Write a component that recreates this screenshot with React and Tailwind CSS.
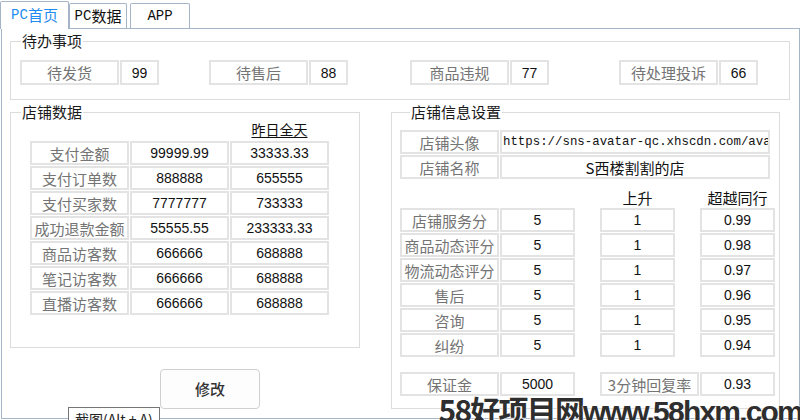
import React from "react";

const cjk = "font-['Noto_Sans_CJK_SC',sans-serif]";
const num = "font-['Liberation_Sans',sans-serif]";
const cell = "flex items-center justify-center border-2 border-[#e3e3e3] bg-white leading-none";
const label = `${cell} ${cjk} text-[15px] text-[#747474]`;
const value = `${cell} ${num} text-[14px] text-[#111]`;

const todo = [
  { name: "待发货", val: "99", ml: "ml-[9px]" },
  { name: "待售后", val: "88", ml: "ml-[50px]" },
  { name: "商品违规", val: "77", ml: "ml-[62px]" },
  { name: "待处理投诉", val: "66", ml: "ml-[70px]" },
];

const shopData = [
  ["支付金额", "99999.99", "33333.33"],
  ["支付订单数", "888888", "655555"],
  ["支付买家数", "7777777", "733333"],
  ["成功退款金额", "55555.55", "233333.33"],
  ["商品访客数", "666666", "688888"],
  ["笔记访客数", "666666", "688888"],
  ["直播访客数", "666666", "688888"],
];

const scores = [
  ["店铺服务分", "5", "1", "0.99"],
  ["商品动态评分", "5", "1", "0.98"],
  ["物流动态评分", "5", "1", "0.97"],
  ["售后", "5", "1", "0.96"],
  ["咨询", "5", "1", "0.95"],
  ["纠纷", "5", "1", "0.94"],
];

const Legend = ({ children }) => (
  <legend className={`ml-[10px] px-[1px] ${cjk} text-[15px] leading-[18px] text-[#1a1a1a]`}>
    {children}
  </legend>
);

const App = () => {
  return (
    <div className="relative w-[800px] h-[420px] overflow-hidden bg-white">
      {/* tabs */}
      <div className="relative z-10 flex items-end h-[29px]">
        <div className={`flex items-center justify-center w-[69px] h-[28px] border border-b-0 border-[#a5b5c8] rounded-t-[2px] bg-white text-[15px] text-[#1e8cf0] ${cjk}`}>
          <span className="font-['Liberation_Mono',monospace] text-[14px]">PC</span>首页
        </div>
        <div className={`flex items-center justify-center w-[58px] h-[25px] mb-px border border-b-0 border-[#a5b5c8] rounded-t-[2px] bg-white text-[15px] text-[#111] ${cjk}`}>
          <span className="font-['Liberation_Mono',monospace] text-[14px]">PC</span>数据
        </div>
        <div className="flex items-center justify-center ml-[3px] w-[60px] h-[25px] mb-px border border-b-0 border-[#a5b5c8] rounded-t-[2px] bg-white font-['Liberation_Mono',monospace] text-[14px] text-[#111]">
          APP
        </div>
      </div>

      {/* panel */}
      <div className="ml-px -mt-px h-[391px] border border-[#a5b5c8]">
        {/* 待办事项 */}
        <fieldset className="ml-[8px] mt-[3px] w-[780px] border border-[#dcdcdc] pt-[10px] pb-[14px]">
          <Legend>待办事项</Legend>
          <div className="flex">
            {todo.map((t) => (
              <div key={t.name} className={`flex gap-px ${t.ml}`}>
                <div className={`${label} w-[99px] h-[25px]`}>{t.name}</div>
                <div className={`${value} w-[39px] h-[25px]`}>{t.val}</div>
              </div>
            ))}
          </div>
        </fieldset>

        <div className="flex mt-[3px]">
          {/* 店铺数据 */}
          <div className="ml-[8px] w-[350px]">
            <fieldset className="w-[350px] border border-[#dcdcdc] pb-[32px]">
              <Legend>店铺数据</Legend>
              <div className="flex justify-end h-[20px] pl-[19px]">
                <div className="w-[99px] mr-[30px] flex justify-center">
                  <span className={`${cjk} text-[14px] leading-[16px] text-[#111] underline underline-offset-[2px]`}>昨日全天</span>
                </div>
              </div>
              <div className="ml-[19px] grid grid-cols-[99px_99px_99px] auto-rows-[24px] gap-px">
                {shopData.map((r) => (
                  <React.Fragment key={r[0]}>
                    <div className={label}>{r[0]}</div>
                    <div className={value}>{r[1]}</div>
                    <div className={value}>{r[2]}</div>
                  </React.Fragment>
                ))}
              </div>
            </fieldset>
            <button className={`mt-[21px] ml-[150px] w-[100px] h-[40px] rounded-[4px] border border-[#d0d0d0] bg-[#fdfdfd] ${cjk} text-[15px] font-medium text-[#333]`}>
              修改
            </button>
          </div>

          {/* 店铺信息设置 */}
          <fieldset className="ml-[31px] w-[389px] border border-[#dcdcdc] pl-[8px] pt-[9px] pb-[10px]">
            <Legend>店铺信息设置</Legend>
            <div className="grid grid-cols-[99px_270px] auto-rows-[24px] gap-px">
              <div className={label}>店铺头像</div>
              <div className="flex items-center overflow-hidden whitespace-nowrap border-2 border-[#e3e3e3] pl-px font-['Liberation_Mono',monospace] text-[12.4px] text-[#111]">
                https://sns-avatar-qc.xhscdn.com/avatar
              </div>
              <div className={label}>店铺名称</div>
              <div className={`${cell} ${cjk} text-[15px] text-[#111]`}>S西楼割割的店</div>
            </div>
            <div className={`flex mt-[11px] h-[18px] ${cjk} text-[15px] leading-[16px] text-[#111]`}>
              <div className="w-[200px]" />
              <div className="w-[75px] text-center">上升</div>
              <div className="ml-[25px] w-[75px] text-center">超越同行</div>
            </div>
            <div className="flex flex-col gap-px">
              {scores.map((r) => (
                <div key={r[0]} className="flex h-[24px]">
                  <div className={`${label} w-[99px] whitespace-nowrap`}>{r[0]}</div>
                  <div className={`${value} ml-px w-[75px]`}>{r[1]}</div>
                  <div className={`${value} ml-[25px] w-[75px]`}>{r[2]}</div>
                  <div className={`${value} ml-[25px] w-[75px]`}>{r[3]}</div>
                </div>
              ))}
            </div>
            <div className="flex h-[24px] mt-[15px]">
              <div className={`${label} w-[99px]`}>保证金</div>
              <div className={`${value} ml-px w-[75px]`}>5000</div>
              <div className={`${label} ml-[25px] w-[99px]`}>3分钟回复率</div>
              <div className={`${value} ml-px w-[75px]`}>0.93</div>
            </div>
          </fieldset>
        </div>
      </div>

      {/* tooltip */}
      <div className={`absolute left-[68px] top-[407px] border border-[#767676] bg-white px-[6px] pt-[2px] ${cjk} text-[14px] leading-[18px] text-[#222]`}>
        截图(Alt + A)
      </div>

      {/* watermark */}
      <div className={`absolute right-[-2px] bottom-[-7px] whitespace-nowrap ${cjk} font-bold text-[30px] leading-none tracking-[-1.8px] text-[#2e2e2e] [text-shadow:0_0_2px_#fff,0_0_2px_#fff]`}>
        58好项目网<span className="font-['Liberation_Sans',sans-serif]">www.58hxm.com</span>
      </div>
    </div>
  );
};

export default App;
